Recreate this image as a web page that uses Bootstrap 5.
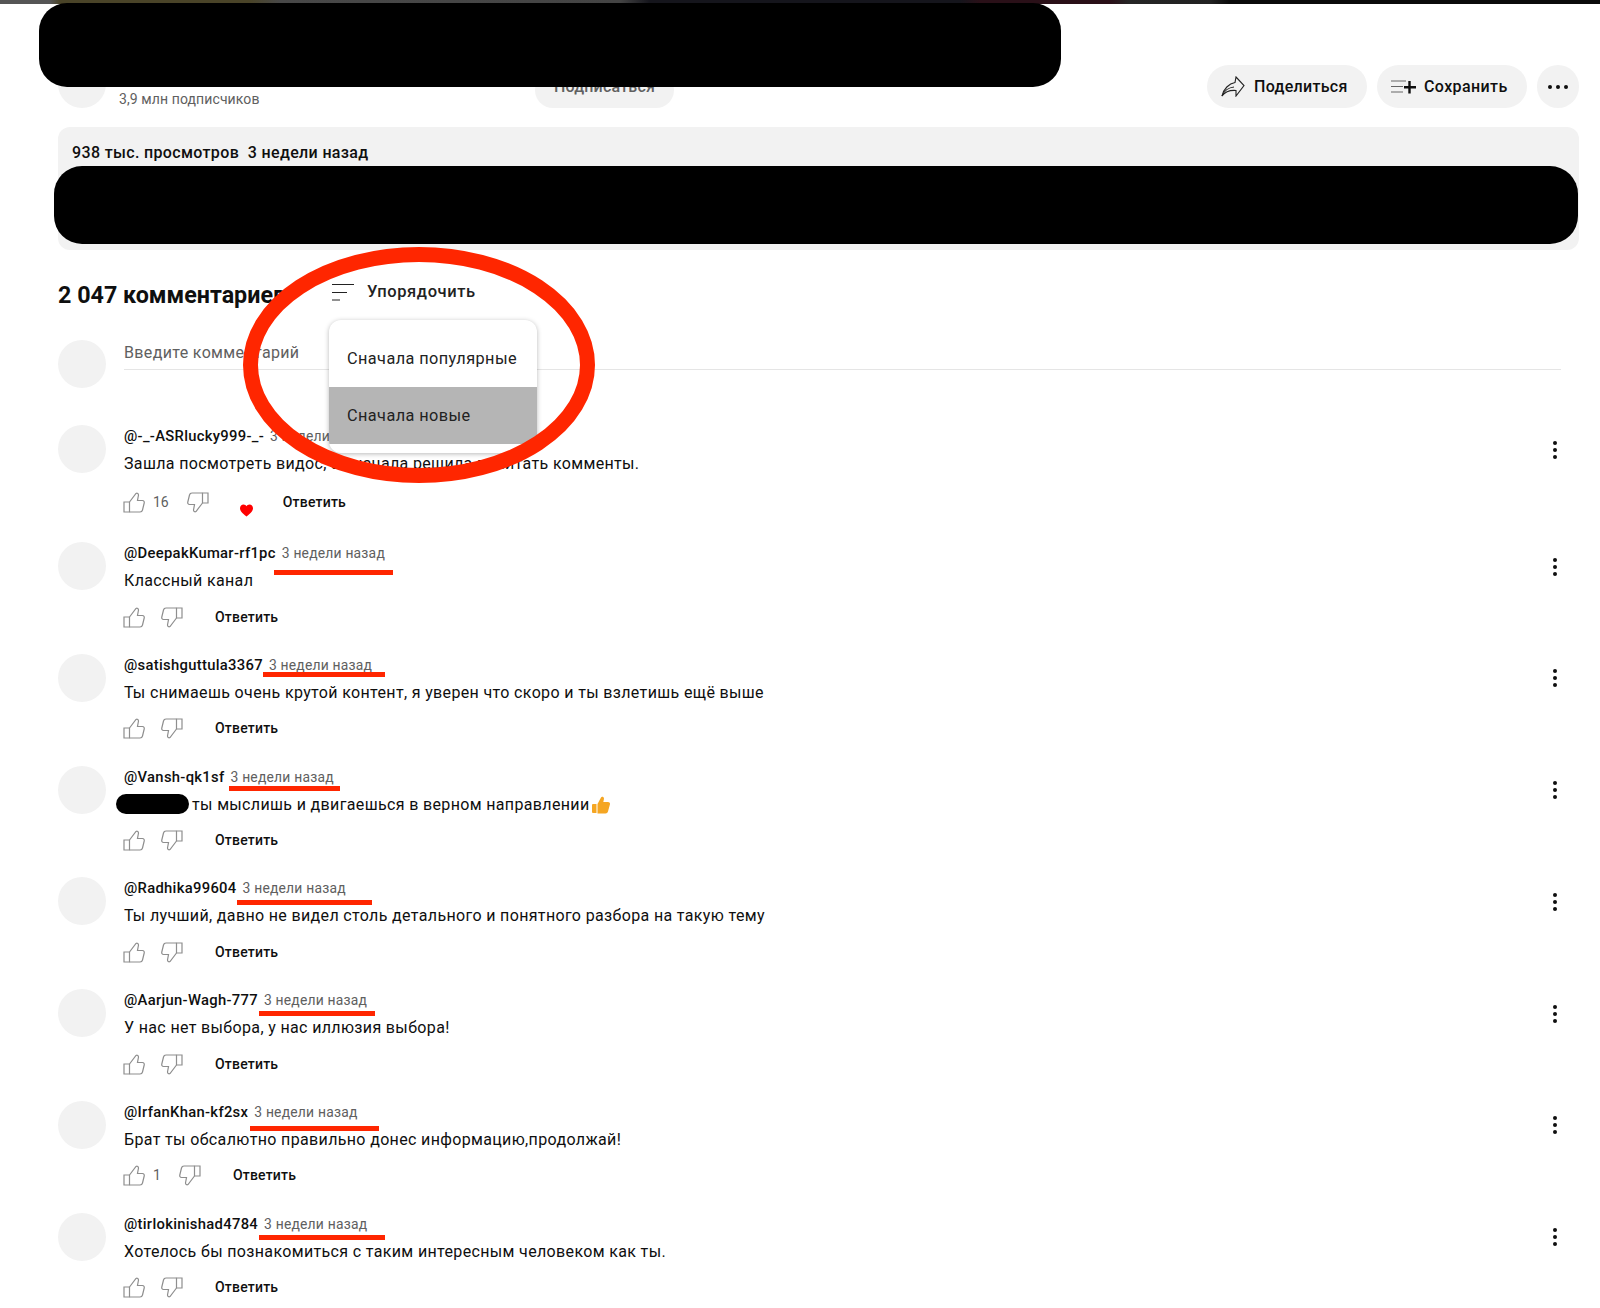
<!doctype html>
<html lang="ru">
<head>
<meta charset="utf-8">
<title>Комментарии</title>
<link href="https://cdn.jsdelivr.net/npm/bootstrap@5.3.0/dist/css/bootstrap.min.css" rel="stylesheet">
<style>
body{font-family:Roboto,"Liberation Sans",sans-serif;color:#0f0f0f;background:#fff}
.topstrip{height:4px;background:linear-gradient(90deg,#555 0,#555 50px,#4a4428 60px,#4a4428 250px,#484848 280px,#444 620px,#15151c 650px,#15151c 960px,#2a1018 980px,#2a1018 1110px,#252525 1130px,#222 1210px,#0a0a0a 1230px)}
.pagewrap{padding:0 21px 0 58px}
.redact{position:absolute;background:#000;border-radius:28px;z-index:5}
.redact-a{left:39px;top:3px;width:1022px;height:84px}
.redact-b{left:54px;top:166px;width:1524px;height:78px}
.avatar-ph{width:48px;height:48px;margin-top:-1px;border-radius:50%;background:#f2f2f2;flex:none}
.channel-row{margin-top:57px;height:48px}
.channel-info{margin-left:13px;padding-top:29px;width:416px;font-size:14px;letter-spacing:.1px;color:#606060;line-height:18px}
.sub-btn{width:139px;height:36px;margin-top:11px;border-radius:18px;background:#f2f2f2;color:#606060;font-weight:500;font-size:16px;letter-spacing:.2px;line-height:30px;text-align:center}
.pill-btn{height:43px;margin-top:4px;border-radius:22px;background:#f2f2f2;font-weight:500;font-size:16px;color:#0f0f0f;flex:none}
.pill-share{width:160px;padding-left:14px;gap:9px;letter-spacing:.3px}
.pill-save{width:150px;margin-left:10px;padding-left:14px;gap:7px;letter-spacing:.4px}
.pill-more{width:42px;margin-left:10px;justify-content:center;gap:4px}
.pill-more i{width:4px;height:4px;border-radius:50%;background:#0f0f0f}
.desc-box{margin-top:18px;height:123px;border-radius:12px;background:#f2f2f2;padding:14px 14px;font-weight:500;font-size:16px;letter-spacing:.35px;line-height:24px}
.cmt-head{margin-top:29px;height:32px;position:relative}
.cmt-title{font-size:23.3px;font-weight:700;line-height:32px;white-space:nowrap;width:274px}
.sort-wrap{position:relative;gap:13px;font-size:16.5px;font-weight:500;letter-spacing:.6px;color:#222;margin-top:-6px;height:32px}
.sort-menu.show{position:absolute;display:block;left:-3px;top:44px;width:208px;height:133px;padding:0;margin:0;border:0;border-radius:12px;background:#fff;box-shadow:0 1px 5px rgba(0,0,0,.28);z-index:3;overflow:hidden}
.sort-menu .dropdown-item{padding:0 18px;font-size:16.3px;letter-spacing:.42px;color:#222;font-weight:400}
.sort-first{height:67px;line-height:78px}
.sort-active{height:57px;line-height:58px;background:#b5b5b5}
.input-row{margin-top:30px;height:48px}
.input-field{margin-left:18px;height:29px;flex:1;margin-right:18px;border-bottom:1px solid #e5e5e5;font-size:16px;letter-spacing:.35px;color:#606060;line-height:24px}
.cmt{height:111.8px}
.cmt-first{height:117px;margin-top:37px}
.cmt-main{margin-left:18px;flex:1}
.cmt-name{height:21px;line-height:21px;font-size:14.8px;letter-spacing:.3px;font-weight:500;white-space:nowrap}
.cmt-time{margin-left:2px;font-size:13.9px;font-weight:400;color:#606060;position:relative;display:inline-block;letter-spacing:.2px}
.cmt-text{height:22px;line-height:22px;margin-top:6px;font-size:16px;letter-spacing:.35px;white-space:nowrap}
.cmt-actions{height:24px;margin-top:13px;margin-left:-1px}
.cmt-first .cmt-actions{margin-top:15px}
.thumb-ico{width:22px;height:21px;flex:none;fill:none;stroke:#8e8e8e;stroke-width:1.2}
.thumb-down{margin-left:16px}
.like-num{margin-left:8px;margin-right:2px;font-size:14px;color:#606060}
.reply-lnk{margin-left:32px;font-size:14px;letter-spacing:.2px;font-weight:500;color:#0f0f0f}
.heart-ico{width:13px;height:13px;margin-left:31px;margin-top:17px;fill:#f00;flex:none}
.heart-ico + .reply-lnk{margin-left:30px}
.dots-col{margin-top:14.5px;margin-right:22px;gap:3px}
.dots-col i{width:4px;height:4px;border-radius:50%;background:#0f0f0f}
.mark-u::after{content:"";position:absolute;height:5px;background:#ff2600}
.u-deepak::after{left:-8px;width:119px;top:27px}
.u-satish::after{left:-6px;width:122px;top:17px}
.u-vansh::after{left:-2px;width:111px;top:19px}
.u-radhika::after{left:-6px;width:135px;top:22px}
.u-aarjun::after{left:-5px;width:116px;top:21px}
.u-irfan::after{left:-4px;width:129px;top:24px}
.u-tirlok::after{left:-5px;width:126px;top:21px}
.pill-redact{display:inline-block;width:73px;height:20px;margin-left:-8px;margin-right:3px;background:#000;border-radius:10px;vertical-align:-4px}
.emoji-thumb{width:18px;height:18px;vertical-align:-4px;margin-left:2px;fill:#f5a623}
.red-ring{position:absolute;left:243px;top:247px;width:352px;height:236px;z-index:6;pointer-events:none}
</style>
</head>
<body>
<div class="position-relative vh-100 overflow-hidden">
  <div class="topstrip"></div>
  <div class="redact redact-a"></div>
  <div class="redact redact-b"></div>
  <svg class="red-ring" viewBox="0 0 352 236"><ellipse cx="176" cy="118" rx="168.500" ry="110.500" fill="none" stroke="#ff2600" stroke-width="15"/></svg>

  <div class="pagewrap">
    <div class="d-flex channel-row">
      <div class="avatar-ph"></div>
      <div class="channel-info">3,9 млн подписчиков</div>
      <div class="sub-btn">Подписаться</div>
      <div class="ms-auto d-flex">
        <div class="pill-btn d-flex align-items-center pill-share">
          <svg width="24" height="21" viewBox="0 0 24 21" fill="none" stroke="#222" stroke-width="1.1"><path d="M15 1 23 9.500 15 20v-5.500C9 14 4 16 1 20 2.500 13 8 7.500 14 6.500Z"/><path d="M1 20C3 15 8 11.500 13 11"/></svg>
          <span>Поделиться</span>
        </div>
        <div class="pill-btn d-flex align-items-center pill-save">
          <svg width="26" height="16" viewBox="0 0 26 16"><path d="M0 2h15M0 7.500h12M0 13h12" stroke="#666" stroke-width="1" fill="none"/><path d="M18.500 2v12.500M13 8.200h12" stroke="#0f0f0f" stroke-width="2.400" fill="none"/></svg>
          <span>Сохранить</span>
        </div>
        <div class="pill-btn d-flex align-items-center pill-more"><i></i><i></i><i></i></div>
      </div>
    </div>

    <div class="desc-box">938 тыс. просмотров&nbsp; 3 недели назад</div>

    <div class="d-flex align-items-center cmt-head">
      <div class="cmt-title">2 047 комментариев</div>
      <div class="d-flex align-items-center sort-wrap">
        <svg width="22" height="17" viewBox="0 0 22 17" fill="none" stroke="#222" stroke-width="1"><path d="M0 .5h22M0 8.500h15M0 16h8"/></svg>
        <span>Упорядочить</span>
        <div class="dropdown-menu show sort-menu">
          <a class="dropdown-item sort-first" href="#">Сначала популярные</a>
          <a class="dropdown-item sort-active" href="#">Сначала новые</a>
        </div>
      </div>
    </div>

    <div class="d-flex input-row">
      <div class="avatar-ph"></div>
      <div class="input-field">Введите комментарий</div>
    </div>

    <div class="d-flex cmt cmt-first">
      <div class="avatar-ph"></div>
      <div class="cmt-main">
        <div class="cmt-name">@-_-ASRlucky999-_- <span class="cmt-time">3 недели назад</span></div>
        <div class="cmt-text">Зашла посмотреть видос, а сначала решила почитать комменты.</div>
        <div class="d-flex align-items-center cmt-actions">
          <svg class="thumb-ico" viewBox="0 0 22 21"><use href="#thumbshape"/></svg>
          <span class="like-num">16</span>
          <svg class="thumb-ico thumb-down" viewBox="0 0 22 21"><use href="#thumbshape" transform="rotate(180 11 10.500)"/></svg>
          <svg class="heart-ico" viewBox="0 0 14 13"><path d="M7 13C2 9 0 6.500 0 4 0 1.500 1.800 0 3.800 0 5.200 0 6.400.8 7 2 7.600.8 8.800 0 10.200 0 12.200 0 14 1.500 14 4 14 6.500 12 9 7 13Z"/></svg>
          <span class="reply-lnk">Ответить</span>
        </div>
      </div>
      <div class="d-flex flex-column dots-col"><i></i><i></i><i></i></div>
    </div>

    <div class="d-flex cmt">
      <div class="avatar-ph"></div>
      <div class="cmt-main">
        <div class="cmt-name">@DeepakKumar-rf1pc <span class="cmt-time mark-u u-deepak">3 недели назад</span></div>
        <div class="cmt-text">Классный канал</div>
        <div class="d-flex align-items-center cmt-actions">
          <svg class="thumb-ico" viewBox="0 0 22 21"><use href="#thumbshape"/></svg>
          <svg class="thumb-ico thumb-down" viewBox="0 0 22 21"><use href="#thumbshape" transform="rotate(180 11 10.500)"/></svg>
          <span class="reply-lnk">Ответить</span>
        </div>
      </div>
      <div class="d-flex flex-column dots-col"><i></i><i></i><i></i></div>
    </div>

    <div class="d-flex cmt">
      <div class="avatar-ph"></div>
      <div class="cmt-main">
        <div class="cmt-name">@satishguttula3367 <span class="cmt-time mark-u u-satish">3 недели назад</span></div>
        <div class="cmt-text">Ты снимаешь очень крутой контент, я уверен что скоро и ты взлетишь ещё выше</div>
        <div class="d-flex align-items-center cmt-actions">
          <svg class="thumb-ico" viewBox="0 0 22 21"><use href="#thumbshape"/></svg>
          <svg class="thumb-ico thumb-down" viewBox="0 0 22 21"><use href="#thumbshape" transform="rotate(180 11 10.500)"/></svg>
          <span class="reply-lnk">Ответить</span>
        </div>
      </div>
      <div class="d-flex flex-column dots-col"><i></i><i></i><i></i></div>
    </div>

    <div class="d-flex cmt">
      <div class="avatar-ph"></div>
      <div class="cmt-main">
        <div class="cmt-name">@Vansh-qk1sf <span class="cmt-time mark-u u-vansh">3 недели назад</span></div>
        <div class="cmt-text"><span class="pill-redact"></span>ты мыслишь и двигаешься в верном направлении<svg class="emoji-thumb" viewBox="0 0 18 18"><path d="M1 8h3.500v9H1a1 1 0 0 1-1-1V9a1 1 0 0 1 1-1ZM5.500 8 9 1.500C9.500.3 12 .5 12 2.800L11.300 6H16c1.500 0 2.300 1.300 1.900 2.600L16 15.500C15.600 16.800 14.800 17.500 13.500 17.500H5.500Z"/></svg></div>
        <div class="d-flex align-items-center cmt-actions">
          <svg class="thumb-ico" viewBox="0 0 22 21"><use href="#thumbshape"/></svg>
          <svg class="thumb-ico thumb-down" viewBox="0 0 22 21"><use href="#thumbshape" transform="rotate(180 11 10.500)"/></svg>
          <span class="reply-lnk">Ответить</span>
        </div>
      </div>
      <div class="d-flex flex-column dots-col"><i></i><i></i><i></i></div>
    </div>

    <div class="d-flex cmt">
      <div class="avatar-ph"></div>
      <div class="cmt-main">
        <div class="cmt-name">@Radhika99604 <span class="cmt-time mark-u u-radhika">3 недели назад</span></div>
        <div class="cmt-text">Ты лучший, давно не видел столь детального и понятного разбора на такую тему</div>
        <div class="d-flex align-items-center cmt-actions">
          <svg class="thumb-ico" viewBox="0 0 22 21"><use href="#thumbshape"/></svg>
          <svg class="thumb-ico thumb-down" viewBox="0 0 22 21"><use href="#thumbshape" transform="rotate(180 11 10.500)"/></svg>
          <span class="reply-lnk">Ответить</span>
        </div>
      </div>
      <div class="d-flex flex-column dots-col"><i></i><i></i><i></i></div>
    </div>

    <div class="d-flex cmt">
      <div class="avatar-ph"></div>
      <div class="cmt-main">
        <div class="cmt-name">@Aarjun-Wagh-777 <span class="cmt-time mark-u u-aarjun">3 недели назад</span></div>
        <div class="cmt-text">У нас нет выбора, у нас иллюзия выбора!</div>
        <div class="d-flex align-items-center cmt-actions">
          <svg class="thumb-ico" viewBox="0 0 22 21"><use href="#thumbshape"/></svg>
          <svg class="thumb-ico thumb-down" viewBox="0 0 22 21"><use href="#thumbshape" transform="rotate(180 11 10.500)"/></svg>
          <span class="reply-lnk">Ответить</span>
        </div>
      </div>
      <div class="d-flex flex-column dots-col"><i></i><i></i><i></i></div>
    </div>

    <div class="d-flex cmt">
      <div class="avatar-ph"></div>
      <div class="cmt-main">
        <div class="cmt-name">@IrfanKhan-kf2sx <span class="cmt-time mark-u u-irfan">3 недели назад</span></div>
        <div class="cmt-text">Брат ты обсалютно правильно донес информацию,продолжай!</div>
        <div class="d-flex align-items-center cmt-actions">
          <svg class="thumb-ico" viewBox="0 0 22 21"><use href="#thumbshape"/></svg>
          <span class="like-num">1</span>
          <svg class="thumb-ico thumb-down" viewBox="0 0 22 21"><use href="#thumbshape" transform="rotate(180 11 10.500)"/></svg>
          <span class="reply-lnk">Ответить</span>
        </div>
      </div>
      <div class="d-flex flex-column dots-col"><i></i><i></i><i></i></div>
    </div>

    <div class="d-flex cmt">
      <div class="avatar-ph"></div>
      <div class="cmt-main">
        <div class="cmt-name">@tirlokinishad4784 <span class="cmt-time mark-u u-tirlok">3 недели назад</span></div>
        <div class="cmt-text">Хотелось бы познакомиться с таким интересным человеком как ты.</div>
        <div class="d-flex align-items-center cmt-actions">
          <svg class="thumb-ico" viewBox="0 0 22 21"><use href="#thumbshape"/></svg>
          <svg class="thumb-ico thumb-down" viewBox="0 0 22 21"><use href="#thumbshape" transform="rotate(180 11 10.500)"/></svg>
          <span class="reply-lnk">Ответить</span>
        </div>
      </div>
      <div class="d-flex flex-column dots-col"><i></i><i></i><i></i></div>
    </div>
  </div>
</div>
<svg width="0" height="0" class="d-block"><defs><g id="thumbshape"><path d="M1 10h5.500v10H1Z"/><path d="M6.500 10 13 1.500C14.200.8 15.500 1.500 15.500 3L14.500 8.500H19.500C20.800 8.500 21.500 9.700 21.200 11L19.500 18C19.200 19.300 18.300 20 17 20H6.500"/></g></defs></svg>
<script src="https://cdn.jsdelivr.net/npm/bootstrap@5.3.0/dist/js/bootstrap.bundle.min.js"></script>
</body>
</html>
